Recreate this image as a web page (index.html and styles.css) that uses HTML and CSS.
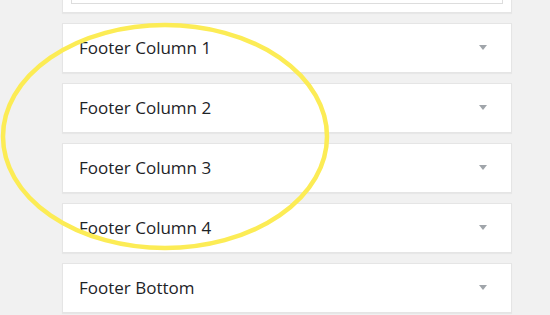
FILE: index.html
```html
<!DOCTYPE html>
<html lang="en">
<head>
    <meta charset="UTF-8">
    <meta name="viewport" content="width=device-width, initial-scale=1.0">
    <title>Footer Widgets</title>
    <link rel="stylesheet" href="styles.css">
</head>
<body>

<div class="areas">
    <!-- widget abierto de arriba, solo se ve el final -->
    <div class="widget widget-abierto">
        <div class="campo"></div>
    </div>

    <div class="widget">
        <span class="nombre">Footer Column 1</span>
        <span class="flecha"></span>
    </div>
    <div class="widget">
        <span class="nombre">Footer Column 2</span>
        <span class="flecha"></span>
    </div>
    <div class="widget">
        <span class="nombre">Footer Column 3</span>
        <span class="flecha"></span>
    </div>
    <div class="widget">
        <span class="nombre">Footer Column 4</span>
        <span class="flecha"></span>
    </div>
    <div class="widget">
        <span class="nombre">Footer Bottom</span>
        <span class="flecha"></span>
    </div>
</div>

<!-- marca amarilla encima -->
<svg class="marca" width="340" height="260" viewBox="0 0 340 260">
    <ellipse cx="165" cy="136.5" rx="162" ry="111.5" fill="none" stroke="#fcec55" stroke-width="4.5"/>
</svg>

</body>
</html>
```

FILE: styles.css
```css
body {
    margin: 0;
    background-color: #f1f1f1;
    font-family: "Open Sans", Arial, sans-serif;
    color: #1d2327;
    height: 315px;
    overflow: hidden;
    position: relative;
}

.areas {
    width: 450px;
    margin-left: 62px;
}

.widget {
    box-sizing: border-box;
    height: 50px;
    margin-bottom: 10px;
    padding: 0 24px 2px 16px;
    background-color: #ffffff;
    border: 1px solid #e5e5e5;
    box-shadow: 0 1px 1px rgba(0, 0, 0, 0.04);
    display: flex;
    align-items: center;
    justify-content: space-between;
}

.widget-abierto {
    height: 40px;
    margin-top: -27px;
    margin-bottom: 10px;
    padding: 0 8px;
    align-items: flex-start;
}

.campo {
    box-sizing: border-box;
    width: 100%;
    height: 30px;
    border: 1px solid #dddddd;
    border-top: none;
}

.nombre {
    font-size: 17px;
    font-weight: 500;
}

.flecha {
    width: 0;
    height: 0;
    border-left: 4px solid transparent;
    border-right: 4px solid transparent;
    border-top: 5px solid #a0a5aa;
}

.marca {
    position: absolute;
    left: 0;
    top: 0;
}
```
